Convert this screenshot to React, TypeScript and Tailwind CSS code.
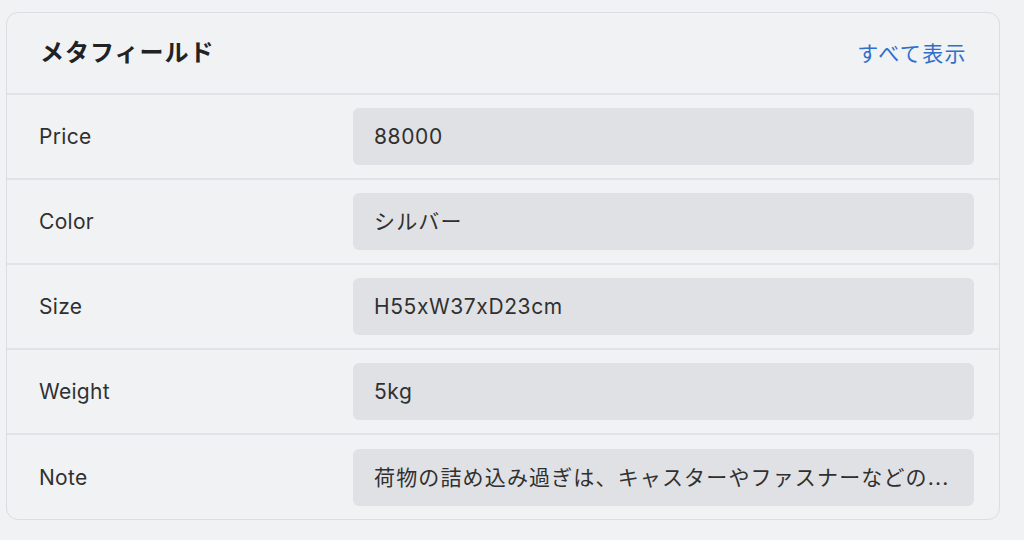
import React from "react";

const rows: { label: string; value: string; cjk?: boolean }[] = [
  { label: "Price", value: "88000" },
  { label: "Color", value: "シルバー", cjk: true },
  { label: "Size", value: "H55xW37xD23cm" },
  { label: "Weight", value: "5kg" },
  { label: "Note", value: "荷物の詰め込み過ぎは、キャスターやファスナーなどの...", cjk: true },
];

export default function App() {
  return (
    <div
      className="w-[1024px] h-[540px] bg-[#f1f2f4] pt-[12px] pl-[6px] pr-[24px] text-[#303030]"
      style={{ fontFamily: 'Inter, "Noto Sans CJK JP", sans-serif' }}
    >
      <div className="w-[994px] rounded-[12px] border border-[#dcdde0] bg-[#f1f2f4] overflow-hidden">
        <div className="flex h-[82px] items-center justify-between pl-[33px] pr-[32px] border-b-2 border-[#e2e3e6]">
          <div className="text-[24px] font-bold tracking-[1px] text-[#222]">メタフィールド</div>
          <div className="text-[21px] text-[#2f6fcc] tracking-[1.4px] pt-[1px]">すべて表示</div>
        </div>
        {rows.map((r, i) => (
          <div
            key={r.label}
            className={`flex items-center pl-[32px] pr-[25px] ${i < rows.length - 1 ? "h-[85px] border-b-2 border-[#e2e3e6]" : "h-[84px]"}`}
          >
            <div className="w-[314px] text-[21px] tracking-[0.3px] pt-[1px]">{r.label}</div>
            <div
              className={`flex-1 h-[57px] rounded-[6px] bg-[#e0e1e4] flex items-center px-[21px] pt-[1px] text-[21px] whitespace-nowrap overflow-hidden ${r.cjk ? "tracking-[1.15px]" : "tracking-[0.6px]"}`}
            >
              {r.value}
            </div>
          </div>
        ))}
      </div>
    </div>
  );
}
